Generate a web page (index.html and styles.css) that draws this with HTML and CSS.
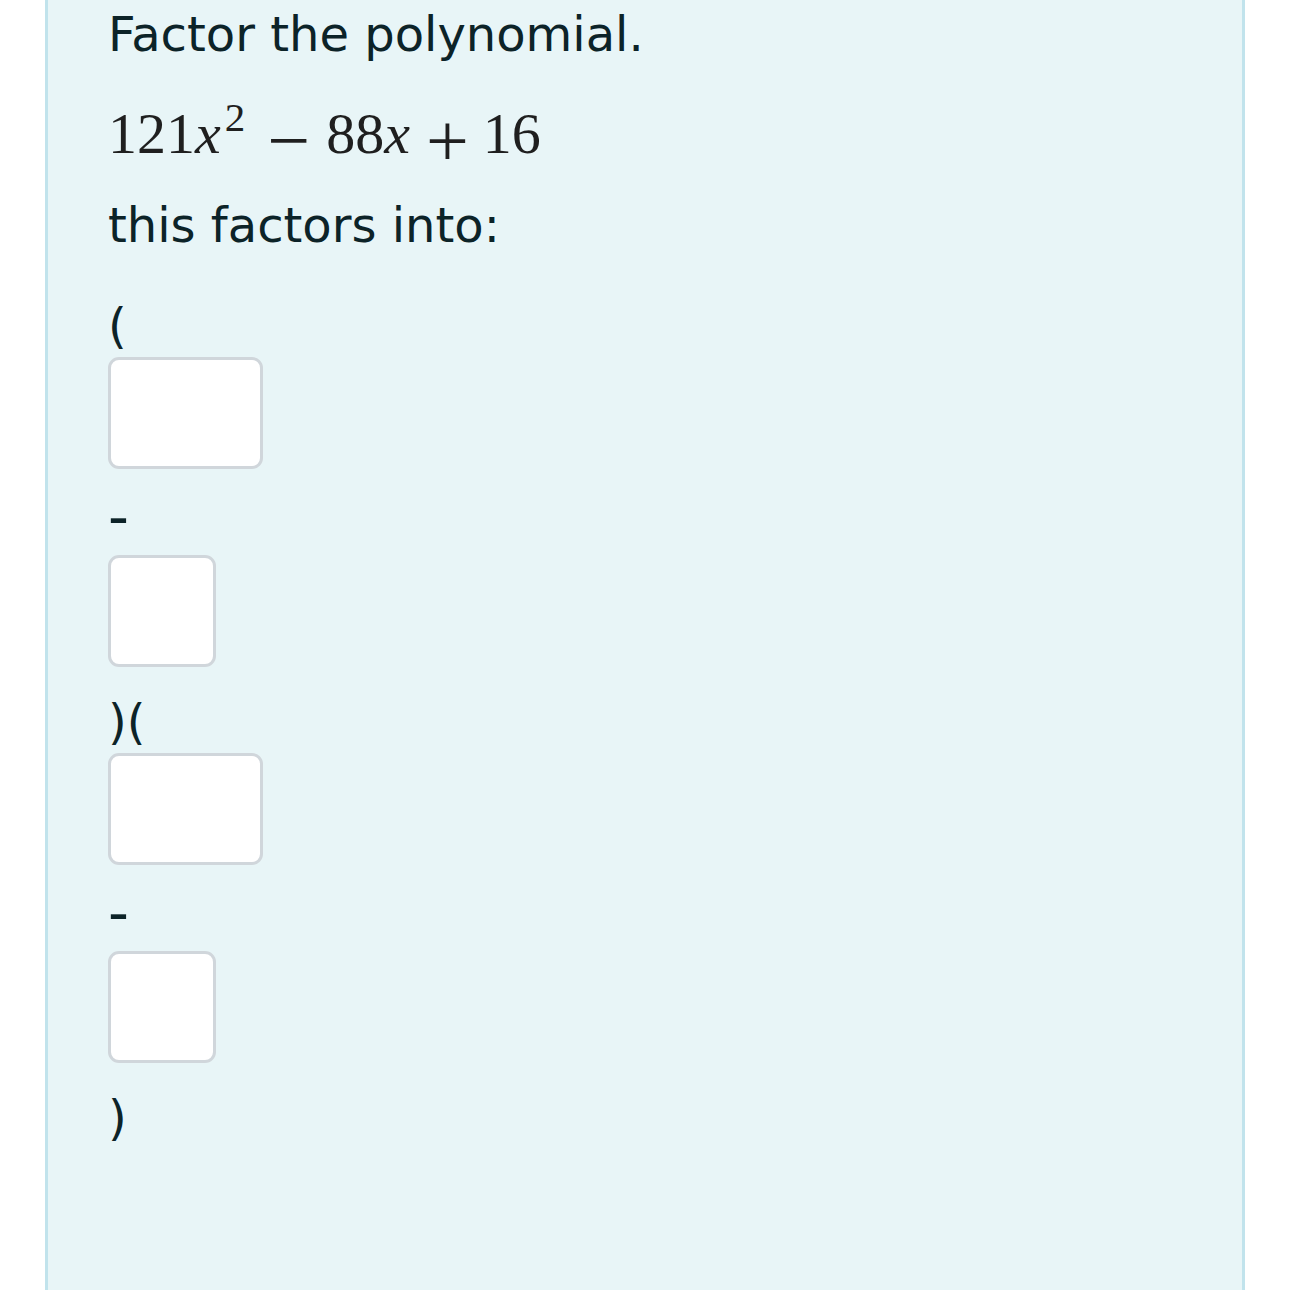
FILE: index.html
```html
<!DOCTYPE html>
<html lang="en">
<head>
<meta charset="utf-8">
<title>Factor the polynomial</title>
<link rel="stylesheet" href="styles.css">
</head>
<body>
<div class="panel">
  <p class="line">Factor the polynomial.</p>
  <p class="math"><span class="num">121</span><span class="var">x</span><sup class="sup">2</sup><span class="op minus">−</span><span class="num">88</span><span class="var">x</span><span class="op plus">+</span><span class="num">16</span></p>
  <p class="line into">this factors into:</p>
  <div class="row first">(</div>
  <input class="box wide" type="text" aria-label="first term">
  <div class="row"><span class="dash">-</span></div>
  <input class="box narrow" type="text" aria-label="second term">
  <div class="row">)(</div>
  <input class="box wide" type="text" aria-label="third term">
  <div class="row"><span class="dash">-</span></div>
  <input class="box narrow" type="text" aria-label="fourth term">
  <div class="row">)</div>
</div>
</body>
</html>
```

FILE: styles.css
```css
html, body {
  margin: 0;
  padding: 0;
  background: #ffffff;
}

.panel {
  margin-left: 45px;
  width: 1200px;
  height: 1290px;
  box-sizing: border-box;
  overflow: hidden;
  border-left: 3px solid #c1e3ec;
  border-right: 3px solid #c1e3ec;
  background: #e8f5f7;
  padding: 2px 0 0 60px;
  font-family: "DejaVu Sans", Verdana, sans-serif;
  font-size: 48px;
  color: #0c2328;
}

.line {
  margin: 0;
  line-height: 64px;
}

.line.into {
  margin-top: 24px;
}

.math {
  margin: 33px 0 0;
  line-height: 70px;
  height: 70px;
  font-family: "Liberation Serif", "Times New Roman", serif;
  font-size: 58px;
  color: #1f1f1f;
  white-space: nowrap;
}

.math .var {
  font-style: italic;
}

.math .sup {
  font-size: 41px;
  vertical-align: 22px;
  margin-left: 4px;
  line-height: 0;
}

.math .op {
  display: inline-block;
  font-size: 76px;
  line-height: 0;
  vertical-align: -13px;
}

.math .minus {
  margin: 0 16px 0 22px;
}

.math .plus {
  margin: 0 14px 0 16px;
}

.row {
  height: 61px;
  line-height: 61px;
  padding-top: 25px;
}

.row.first {
  margin-top: 14px;
}

.dash {
  font-size: 58px;
  vertical-align: 4px;
  line-height: 0;
}

.box {
  display: block;
  box-sizing: border-box;
  height: 112px;
  margin: 0;
  padding: 0;
  border: 3px solid #d0d6db;
  border-radius: 11px;
  background: #ffffff;
  outline: none;
}

.box.wide {
  width: 155px;
}

.box.narrow {
  width: 108px;
}
```
